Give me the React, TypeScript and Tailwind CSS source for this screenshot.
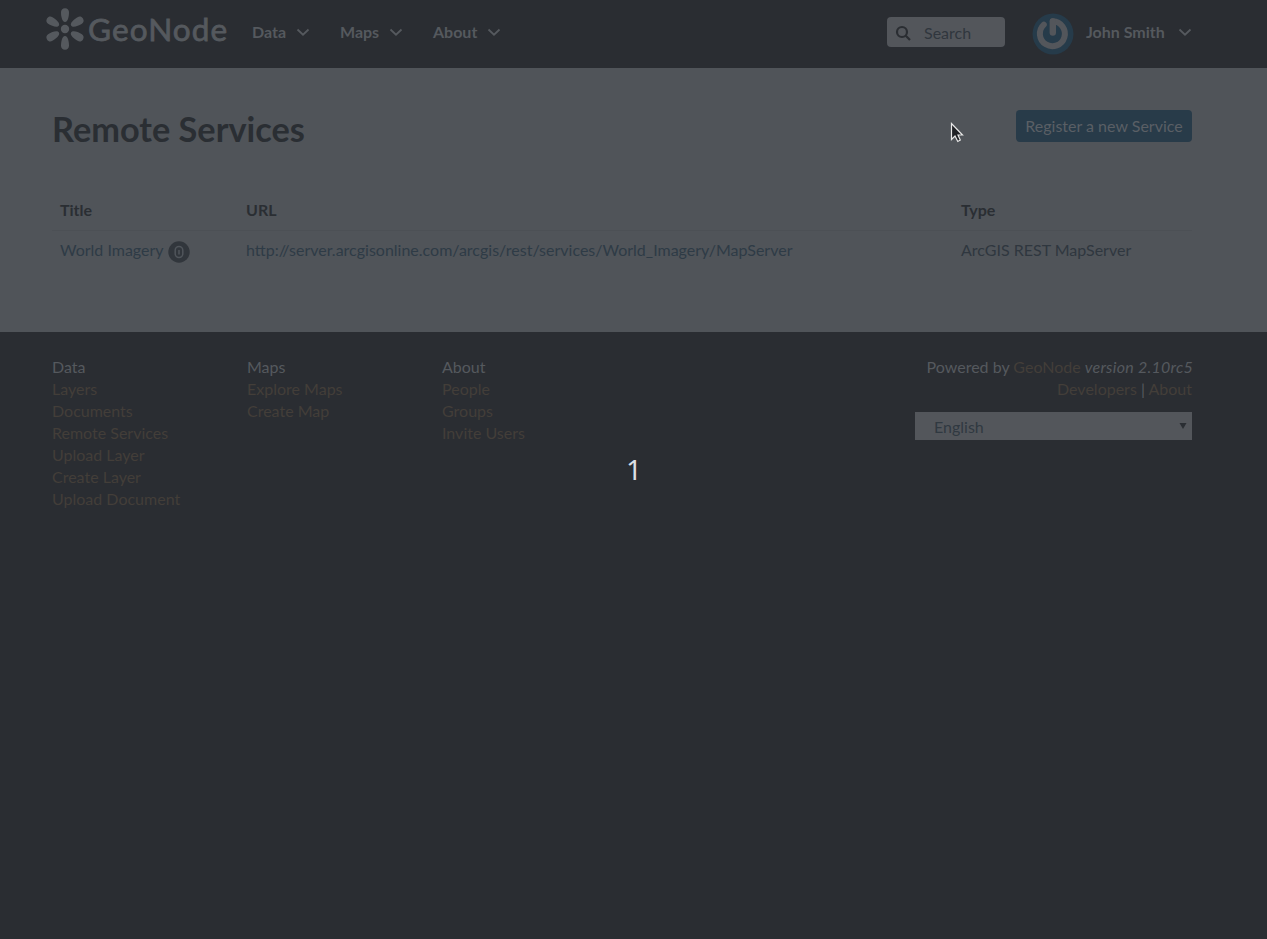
import React from "react";

const Chevron = ({ className = "" }: { className?: string }) => (
  <svg className={className} width="14" height="10" viewBox="0 0 14 10" fill="none" stroke="currentColor" strokeWidth="1.8">
    <path d="M1.5 2.5 L7 7.7 L12.5 2.5" />
  </svg>
);

const Logo = () => (
  <svg width="40" height="44" viewBox="0 0 40 44" fill="currentColor">
    <circle cx="20" cy="22" r="4.2" />
    {[0, 60, 120, 180, 240, 300].map((a) => (
      <path key={a} transform={`rotate(${a} 20 22)`} d="M20 1.2 C22.6 1.2 24 3 24 5.2 C24 9 23 15 20 15 C17 15 16 9 16 5.2 C16 3 17.4 1.2 20 1.2 Z" />
    ))}
  </svg>
);

const Avatar = () => (
  <svg width="42" height="42" viewBox="0 0 42 42" fill="none">
    <circle cx="21" cy="21" r="20.5" fill="#263b4a" />
    <path d="M11.8 11.6 A12.5 12.5 0 1 0 20.8 8.2" stroke="#53565b" strokeWidth="6" strokeLinecap="round" />
    <path d="M20.8 8.5 V19.5" stroke="#53565b" strokeWidth="6.4" strokeLinecap="round" />
  </svg>
);

const columns = [
  { title: "Data", links: ["Layers", "Documents", "Remote Services", "Upload Layer", "Create Layer", "Upload Document"] },
  { title: "Maps", links: ["Explore Maps", "Create Map"] },
  { title: "About", links: ["People", "Groups", "Invite Users"] },
];

export default function App() {
  return (
    <div className="relative h-[939px] w-[1267px] overflow-hidden bg-[#2a2d32] font-['Lato',sans-serif] text-base text-[#55595e]">
      <header className="flex h-[68px] items-start pl-[45px]">
        <div className="flex w-[207px] pt-[7px]">
          <Logo />
          <span className="ml-[3px] text-[31.5px] leading-[44px] tracking-[1.1px] whitespace-nowrap [-webkit-text-stroke:0.8px_#55595e]">GeoNode</span>
        </div>
        <nav className="flex pt-[20px] leading-[24px] font-bold">
          <div className="flex w-[88px] items-center"><span className="w-[44px]">Data</span><Chevron /></div>
          <div className="flex w-[93px] items-center"><span className="w-[49px]">Maps</span><Chevron /></div>
          <div className="flex w-[100px] items-center"><span className="w-[54px]">About</span><Chevron /></div>
        </nav>
        <div className="mt-[17px] ml-[354px] flex h-[30px] w-[118px] items-center rounded bg-[#53565b] pl-2 text-[#30363e]">
          <svg className="mt-[2px]" width="17" height="17" viewBox="0 0 17 17" fill="none" stroke="#2a2d32" strokeWidth="2.2">
            <circle cx="7" cy="7" r="5" /><path d="M10.8 10.8 L15 15" />
          </svg>
          <span className="ml-[12px] pt-[2px]">Search</span>
        </div>
        <div className="mt-[13px] ml-[27px]"><Avatar /></div>
        <div className="mt-[20px] ml-[12px] flex items-center leading-[24px] font-bold"><span className="w-[92px]">John Smith</span><Chevron /></div>
      </header>

      <main className="h-[264px] bg-[#505459] text-[#2a2e33]">
        <div className="flex justify-between pr-[75px] pl-[52px]">
          <h1 className="mt-[39px] mb-px text-[34.3px] leading-[44px] font-bold whitespace-nowrap">Remote Services</h1>
          <button className="mt-[42px] h-[32px] w-[176px] rounded bg-[#283b49] text-[16px] whitespace-nowrap text-[#5a5f65]">Register a new Service</button>
        </div>
        <div className="mr-[75px] ml-[52px] pt-[46px]">
          <div className="grid h-[33px] grid-cols-[186px_715px_1fr] border-b border-[#4c5055] pl-2 leading-[24px] font-bold">
            <span>Title</span><span>URL</span><span>Type</span>
          </div>
          <div className="grid grid-cols-[186px_715px_1fr] pt-[7px] pl-2 leading-[24px] text-[#2e3b46]">
            <span className="flex h-[24px] items-center">World Imagery
              <svg className="mt-[3px] ml-[4px]" width="22" height="22" viewBox="0 0 22 22">
                <circle cx="11" cy="11" r="10.7" fill="#31363c" />
                <path d="M11 5.5 a3.8 3.8 0 0 1 3.8 3.8 v3.4 a3.8 3.8 0 0 1 -7.6 0 v-3.4 a3.8 3.8 0 0 1 3.8 -3.8 Z M11 9 v4.5" fill="none" stroke="#50555b" strokeWidth="1.5" />
              </svg>
            </span>
            <span>http://server.arcgisonline.com/arcgis/rest/services/World_Imagery/MapServer</span>
            <span className="text-[#2f373f]">ArcGIS REST MapServer</span>
          </div>
        </div>
      </main>

      <footer className="flex pt-[24px] pr-[75px] pl-[52px] leading-[22px]">
        {columns.map((c) => (
          <div key={c.title} className="w-[195px]">
            <div>{c.title}</div>
            {c.links.map((l) => <div key={l} className="text-[#433e39]">{l}</div>)}
          </div>
        ))}
        <div className="ml-auto w-[277px] text-right">
          <div className="-mr-px whitespace-nowrap">Powered by <span className="text-[#433e39]">GeoNode</span> <i className="tracking-[0.25px]">version 2.10rc5</i></div>
          <div className="text-[#433e39]">Developers <span className="text-[#55595e]">|</span> About</div>
          <div className="mt-[12px] flex h-[28px] items-center justify-between bg-[#53565b] pr-[5px] pl-[19px] text-[#303941]">
            <span className="pt-[2px]">English</span>
            <svg className="-mt-px" width="8" height="6" viewBox="0 0 8 6"><path d="M0.5 0 H7.5 L4 6 Z" fill="#2a2e33" /></svg>
          </div>
        </div>
      </footer>

      <div className="absolute top-[449px] left-[626px] font-['Noto_Sans',sans-serif] text-[28px] leading-[40px] text-[#dcdfe4]">1</div>
      <svg className="absolute top-[122px] left-[950px]" width="14" height="21" viewBox="0 0 14 21">
        <path d="M1.5 1.5 V17.5 L5 14 L7.8 19.5 L10.3 18 L8 13 H12.5 Z" fill="#202226" stroke="#e8e8e8" strokeWidth="1.2" />
      </svg>
    </div>
  );
}
